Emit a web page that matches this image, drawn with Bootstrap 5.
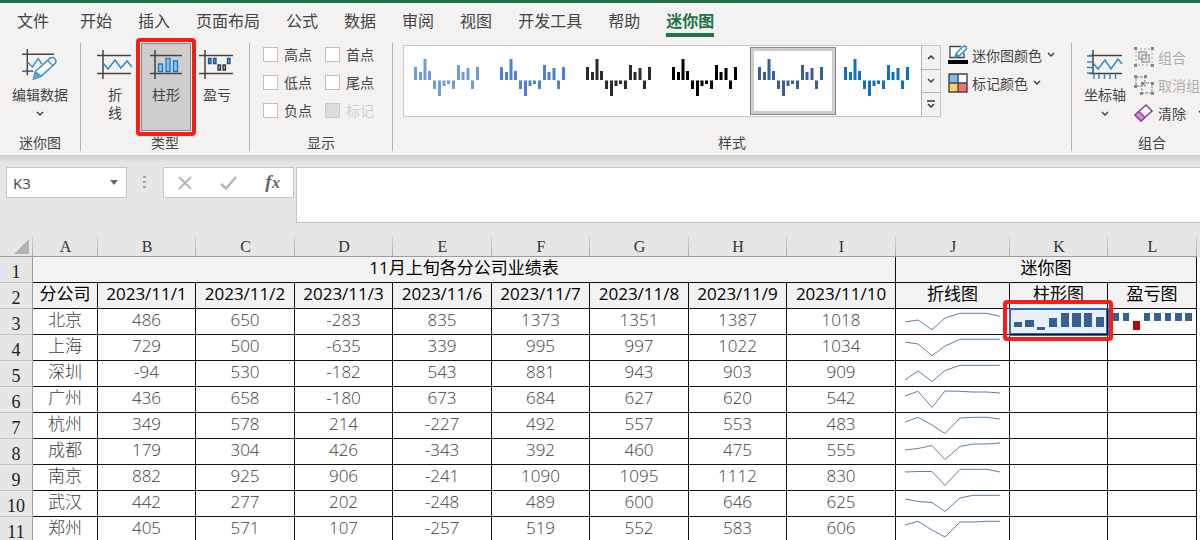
<!DOCTYPE html>
<html lang="zh-CN">
<head>
<meta charset="utf-8">
<meta name="viewport" content="width=device-width, initial-scale=1">
<title>迷你图</title>
<link href="https://cdn.jsdelivr.net/npm/bootstrap@5.3.0/dist/css/bootstrap.min.css" rel="stylesheet">
<style>
  :root { --green: #217346; --ribbon: #f3f2f1; --chrome: #e6e6e6; --ink: #444; --mark-red: #fd1c14; }
  body { font-family: "Noto Sans CJK SC", sans-serif; font-size: 14px; line-height: 18px; color: var(--ink); background: #fff; }
  button { color: inherit; background: none; border: 0; padding: 0; }
  svg { display: block; flex: none; }

  .ribbon-tabs { border-top: 3px solid var(--green); background: var(--ribbon); gap: 26px; padding: 5px 0 0 17px; height: 40px; }
  .ribbon-tabs .nav-link { padding: 0; font-size: 16px; line-height: 25px; height: 29px; color: var(--ink); white-space: nowrap; }
  .ribbon-tabs .nav-item:first-child { margin-right: 5px; }
  .ribbon-tabs .nav-link.active { color: var(--green); font-weight: 700; border-bottom: 4px solid var(--green); }

  .ribbon { background: var(--ribbon); height: 115px; padding-top: 2px; }
  .ribbon-group { display: flex; flex-direction: column; flex: none; height: 108px; margin-top: 1px; border-right: 1px solid #b5b3b1; }
  .group-body { flex: 1; display: flex; }
  .group-name { text-align: center; line-height: 18px; }
  .g-edit { width: 81px; } .g-type { width: 169px; } .g-show { width: 143px; } .g-style { flex: 1 1 0; min-width: 0; }
  .g-style .group-body { padding-top: 2px; }
  .g-combine { width: 128px; border-right: 0; overflow: hidden; }
  .g-combine > * { width: 160px; }

  .big-btn { display: flex; flex-direction: column; align-items: center; height: 88px; padding-top: 6px; white-space: nowrap; }
  .big-btn svg { margin-bottom: 4px; }
  .big-btn.first-type { width: 44px; margin: 0 4px 0 12px; }
  .big-btn.pressed { position: relative; background: #d0cecd; border: 1px solid #8a8886; padding-top: 5px; }
  .callout { position: absolute; border: 4px solid var(--mark-red); border-radius: 4px; pointer-events: none; z-index: 3; }
  .callout-btn { inset: -6px; }
  .callout-cell { inset: -9px -6px -7px -7px; }

  .show-grid { display: grid; grid-template-columns: 62px auto; align-content: start; row-gap: 10px; padding: 2px 0 0 13px; }
  .show-grid .form-check { display: flex; align-items: center; gap: 6px; margin: 0; padding: 0; min-height: 0; height: 18px; }
  .show-grid .form-check-input { float: none; margin: 0; width: 15px; height: 15px; border-radius: 0; border: 1px solid #c2c0be; background: #fff; }
  .show-grid .form-check-input:disabled { background: #dcdbda; border-color: #c8c8c8; opacity: 1; }
  .show-grid .form-check-label { opacity: 1; }
  .off { color: #b0aeac !important; }

  .gallery { flex: 0 1 538px; margin: 0 7px 0 10px; height: 72px; border: 1px solid #c8c6c4; background: #fff; overflow: hidden; }
  .thumbs { padding: 1px 0 0 2px; }
  .thumb { display: flex; align-items: flex-start; flex: none; width: 86px; height: 68px; padding: 8px 0 0 4px; border: 4px solid transparent; }
  .thumb.chosen { border-color: #cfcdcb; outline: 1px solid #8a8886; outline-offset: -1px; }
  .scrollers { width: 19px; margin-left: auto; background: var(--ribbon); border-left: 1px solid #b5b3b1; }
  .scrollers button { flex: 1; display: flex; align-items: center; justify-content: center; }
  .scrollers button + button { border-top: 1px solid #b5b3b1; }
  .row-btn { display: flex; align-items: center; gap: 4px; height: 20px; white-space: nowrap; }
  .row-btn svg + span + svg { margin-left: 1px; }

  .formula-bar { background: linear-gradient(#d0cecd, var(--chrome) 8px); height: 80px; padding: 12px 0 0 6px; }
  .formula-bar .box { background: #fff; border: 1px solid #c6c6c6; height: 31px; }
  .name-box { width: 121px; }
  .name-box input { width: 90px; border: 0; padding: 0 6px; color: var(--ink); font: 15px/28px "Open Sans", sans-serif; outline: 0; background: none; }
  .fx-box { width: 131px; padding: 0 13px; margin-right: 2px; }
  .fx-btn { font: italic 700 19px/24px "Liberation Serif", serif; color: #666; }
  .formula-input { flex: 1; border: 1px solid #c6c6c6; border-right: 0; background: #fdfdfd; height: 56px; resize: none; outline: 0; border-radius: 0; }

  .sheet { table-layout: fixed; width: 100%; border-collapse: separate; border-spacing: 0; color: #3c3c3c; font: 300 17px/20px "Open Sans", "Noto Sans CJK SC", sans-serif; text-align: center; }
  .sheet th, .sheet td { padding: 0 0 3px; height: 26px; border-right: 1px solid #111; border-bottom: 1px solid #111; white-space: nowrap; }
  .sheet thead th { height: 22px; background: linear-gradient(to top, #a8a8a8, #d8d8d8) right / 1px 100% no-repeat var(--chrome); border-right: 0; border-bottom-color: #9c9c9c; font: 400 16px/19px "Liberation Serif", serif; color: #333; padding: 2px 0 0; }
  .sheet tbody th.num { background: var(--chrome); border-right-color: #9c9c9c; border-bottom-color: #c4c4c4; font: 400 18px/20px "Liberation Serif", serif; color: #222; padding: 4px 0 0; }
  .sheet th.title { background: #f2f2f2; color: #000; font-weight: 400; }
  .sheet th.day { font-weight: 500; }
  .sheet td.spare, .sheet thead th.spare { border-right: 0; border-bottom-color: #d4d4d4; background-image: none; }
  .sheet td.spark { position: relative; padding: 0; }
  .spark polyline { fill: none; stroke: #5f7fa8; stroke-width: 1; }
  .picked { background: #e9f0fa; box-shadow: inset 0 0 0 1px #2b68bf, 0 0 0 1px #2b68bf; z-index: 2; }
</style>
</head>
<body>
<svg width="0" height="0" class="position-absolute" aria-hidden="true">
  <symbol id="bars" viewBox="0 0 66 38"><path fill="currentColor" d="M0 8h3v13H0zM5 13h3v8H5zM9.500 0h3v21h-3zM14 12h3v9h-3zM19 21.500h3V30h-3zM24 21.500h3V37h-3zM28.500 21.500h3V27h-3zM33 21.500h3V25h-3zM38 21.500h3V30h-3zM43 6h3v15h-3zM47.500 13h3v8h-3zM52.500 9h3v12h-3zM57 21.500h3V30h-3zM62 8h3v13h-3z"/></symbol>
  <symbol id="down" viewBox="0 0 8 6"><path d="M1 1l3 3 3-3" fill="none" stroke="#444" stroke-width="1.500"/></symbol>
  <symbol id="frame" viewBox="0 0 36 32"><path d="M0 6.500h34M0 24.500h34M6 1v29" fill="none" stroke="#444" stroke-width="1.500"/></symbol>
</svg>

<div class="vh-100 d-flex flex-column overflow-hidden">
  <ul class="nav ribbon-tabs flex-nowrap flex-shrink-0">
    <li class="nav-item"><a class="nav-link" href="#">文件</a></li>
    <li class="nav-item"><a class="nav-link" href="#">开始</a></li>
    <li class="nav-item"><a class="nav-link" href="#">插入</a></li>
    <li class="nav-item"><a class="nav-link" href="#">页面布局</a></li>
    <li class="nav-item"><a class="nav-link" href="#">公式</a></li>
    <li class="nav-item"><a class="nav-link" href="#">数据</a></li>
    <li class="nav-item"><a class="nav-link" href="#">审阅</a></li>
    <li class="nav-item"><a class="nav-link" href="#">视图</a></li>
    <li class="nav-item"><a class="nav-link" href="#">开发工具</a></li>
    <li class="nav-item"><a class="nav-link" href="#">帮助</a></li>
    <li class="nav-item"><a class="nav-link active" href="#" aria-current="page">迷你图</a></li>
  </ul>

  <div class="ribbon d-flex flex-shrink-0">
    <section class="ribbon-group g-edit">
      <div class="group-body justify-content-center">
        <button class="big-btn" type="button">
          <svg width="36" height="32" viewBox="0 0 38 34"><path d="M0 5.500h34M0 23.500h12M5.500 0v28" fill="none" stroke="#444" stroke-width="1.500"/><path d="M6 14l5 5 6-9 4 6" fill="none" stroke="#2e8bd0" stroke-width="1.500"/><path d="M12 32l2-8L30 9.500q3-1.500 5 1t0 5L20 29z" fill="#fff" stroke="#2e8bd0" stroke-width="1.500"/><path d="M12 32l2-8 6 5z" fill="#5aa9e0"/><path d="M27 12l5 5M14 24l6 5" stroke="#2e8bd0" stroke-width="1.300"/></svg>
          <span>编辑数据</span>
          <svg class="mt-2" width="8" height="6"><use href="#down"/></svg>
        </button>
      </div>
      <div class="group-name">迷你图</div>
    </section>

    <section class="ribbon-group g-type">
      <div class="group-body">
        <button class="big-btn first-type" type="button">
          <svg width="36" height="32" viewBox="0 0 36 32"><use href="#frame"/><path d="M6 14l5 6 7-9 6 8 6-7 5 6" fill="none" stroke="#2e8bd0" stroke-width="1.500"/></svg>
          <span>折<br>线</span>
        </button>
        <button class="big-btn pressed px-1" type="button" aria-pressed="true">
          <svg class="mx-1" width="32" height="32" viewBox="0 0 34 32" preserveAspectRatio="xMidYMid slice"><use href="#frame" width="36" height="32"/><g fill="#83c3f0" stroke="#1f78be" stroke-width="1.300"><path d="M9.500 15h4v7.500h-4zM17 9.500h4v13h-4zM24.500 12h4v10.500h-4z"/></g></svg>
          <span>柱形</span>
          <i class="callout callout-btn"></i>
        </button>
        <button class="big-btn px-2" type="button">
          <svg width="36" height="32" viewBox="0 0 36 32"><use href="#frame"/><path d="M9.500 9.500h2.500v5H9.500zM14.500 9.500h2.500v5h-2.500zM28.500 9.500h2.500v5h-2.500z" fill="#4ba0dd" stroke="#155a96" stroke-width="1.300"/><path d="M19 16h2.500v5H19zM24 16h2.500v5H24z" fill="#aaa" stroke="#333" stroke-width="1.300"/></svg>
          <span>盈亏</span>
        </button>
      </div>
      <div class="group-name">类型</div>
    </section>

    <section class="ribbon-group g-show">
      <div class="group-body show-grid">
        <div class="form-check"><input class="form-check-input" type="checkbox" id="c1"><label class="form-check-label" for="c1">高点</label></div>
        <div class="form-check"><input class="form-check-input" type="checkbox" id="c2"><label class="form-check-label" for="c2">首点</label></div>
        <div class="form-check"><input class="form-check-input" type="checkbox" id="c3"><label class="form-check-label" for="c3">低点</label></div>
        <div class="form-check"><input class="form-check-input" type="checkbox" id="c4"><label class="form-check-label" for="c4">尾点</label></div>
        <div class="form-check"><input class="form-check-input" type="checkbox" id="c5"><label class="form-check-label" for="c5">负点</label></div>
        <div class="form-check"><input class="form-check-input" type="checkbox" id="c6" disabled><label class="form-check-label off" for="c6">标记</label></div>
      </div>
      <div class="group-name">显示</div>
    </section>

    <section class="ribbon-group g-style">
      <div class="group-body">
        <div class="gallery d-flex">
          <div class="thumbs d-flex overflow-hidden">
            <button class="thumb" type="button" aria-label="样式 1" style="color:#6f9bd8"><svg width="66" height="38"><use href="#bars"/></svg></button>
            <button class="thumb" type="button" aria-label="样式 2" style="color:#4a82cf"><svg width="66" height="38"><use href="#bars"/></svg></button>
            <button class="thumb" type="button" aria-label="样式 3" style="color:#2b2b2b"><svg width="66" height="38"><use href="#bars"/></svg></button>
            <button class="thumb" type="button" aria-label="样式 4" style="color:#000"><svg width="66" height="38"><use href="#bars"/></svg></button>
            <button class="thumb chosen" type="button" aria-label="样式 5" style="color:#365f9a"><svg width="66" height="38"><use href="#bars"/></svg></button>
            <button class="thumb" type="button" aria-label="样式 6" style="color:#0f6fc0"><svg width="66" height="38"><use href="#bars"/></svg></button>
          </div>
          <div class="scrollers d-flex flex-column flex-shrink-0">
            <button type="button" aria-label="上一行"><svg width="8" height="6" viewBox="0 0 8 6"><path d="M1 5l3-3 3 3" fill="none" stroke="#333" stroke-width="1.500"/></svg></button>
            <button type="button" aria-label="下一行"><svg width="8" height="6"><use href="#down"/></svg></button>
            <button type="button" aria-label="更多"><svg width="10" height="9" viewBox="0 0 10 9"><path d="M1 1h8M2 4l3 3 3-3" fill="none" stroke="#333" stroke-width="1.500"/></svg></button>
          </div>
        </div>
        <div class="d-flex flex-column gap-2">
          <button class="row-btn" type="button">
            <svg width="20" height="20" viewBox="0 0 20 20"><path d="M13 1.500H2v11h14V8" fill="#fff" stroke="#444" stroke-width="1.300"/><path d="M7 12l1.500-4 6.500-6.500q2-1 3 0t0 3L11 11z" fill="#fff" stroke="#2e8bd0" stroke-width="1.400"/><path d="M7 12l1.500-4 2.500 3z" fill="#2e8bd0"/><path d="M0 15h20v4H0z"/></svg>
            <span>迷你图颜色</span><svg width="8" height="6"><use href="#down"/></svg>
          </button>
          <button class="row-btn" type="button">
            <svg width="20" height="20" viewBox="0 0 20 20"><path fill="#80b9f0" d="M1 1h9v9H1z"/><path fill="#fff" d="M10 1h9v9h-9z"/><path fill="#fbd36b" d="M1 10h9v9H1z"/><path fill="#f2707a" d="M10 10h9v9h-9z"/><path d="M1 1h18v18H1zM10 1v18M1 10h18" fill="none" stroke="#444" stroke-width="1.400"/></svg>
            <span>标记颜色</span><svg width="8" height="6"><use href="#down"/></svg>
          </button>
        </div>
      </div>
      <div class="group-name">样式</div>
    </section>

    <section class="ribbon-group g-combine">
      <div class="group-body">
        <button class="big-btn ms-2 px-1" type="button">
          <svg width="36" height="32" viewBox="0 0 36 32"><path d="M2 6.500h33M2 24.500h33M6 1v24" fill="none" stroke="#444" stroke-width="1.500"/><path d="M0 7h5M0 13h5M0 18.500h5M0 24h5M7 25v5M12 25v5M17.500 25v5M23 25v5M28.500 25v5M6 14l5 6 7-9 6 9 7-10 4 5" fill="none" stroke="#2e8bd0" stroke-width="1.500"/></svg>
          <span>坐标轴</span>
          <svg class="mt-2" width="8" height="6"><use href="#down"/></svg>
        </button>
        <div class="d-flex flex-column gap-2 ms-1 pt-1">
          <button class="row-btn off" type="button" disabled>
            <svg width="20" height="20" viewBox="0 0 20 20"><g fill="none" stroke="#a3a1a0"><path d="M2 2h16v16H2z" stroke-dasharray="2 2"/><path d="M5 5h7v7H5zM8 8h7v7H8z" stroke-width="1.500"/></g><path fill="#888" d="M0 0h3v3H0zM17 0h3v3h-3zM0 17h3v3H0zM17 17h3v3h-3z"/></svg>
            <span>组合</span>
          </button>
          <button class="row-btn off" type="button" disabled>
            <svg width="20" height="20" viewBox="0 0 20 20"><path d="M2 2h9v9H2zM8 8h10v10H8z" fill="none" stroke="#a3a1a0" stroke-width="1.300" stroke-dasharray="3 1"/><path fill="#888" d="M0 0h3v3H0zM10 0h3v3h-3zM0 10h3v3H0zM17 7h3v3h-3zM6 17h3v3H6zM17 17h3v3h-3zM7 7h3v3H7z"/></svg>
            <span>取消组</span>
          </button>
          <button class="row-btn" type="button">
            <svg width="20" height="20" viewBox="0 0 20 20"><path d="M1 12L12 2l6 6L7 18z" fill="#fff" stroke="#8f3f9e" stroke-width="1.500"/><path d="M1 12l4-3.500 6 6L7 18z" fill="#d68fdd" stroke="#8f3f9e" stroke-width="1.300"/></svg>
            <span>清除</span><svg class="ms-2" width="8" height="6"><use href="#down"/></svg>
          </button>
        </div>
      </div>
      <div class="group-name">组合</div>
    </section>
  </div>

  <div class="formula-bar d-flex flex-shrink-0 align-items-start">
    <div class="box name-box d-flex align-items-center">
      <input type="text" value="K3" aria-label="名称框">
      <svg class="ms-auto me-2" width="8" height="5" viewBox="0 0 8 5"><path d="M0 0h8L4 5z" fill="#666"/></svg>
    </div>
    <svg width="36" height="31" viewBox="0 0 36 31"><path d="M16 9h3v2h-3zM16 14h3v2h-3zM16 19h3v2h-3z" fill="#a5a5a5"/></svg>
    <div class="box fx-box d-flex align-items-center justify-content-between">
      <button type="button" aria-label="取消"><svg width="16" height="14" viewBox="0 0 16 14"><path d="M2 1l12 12M14 1L2 13" stroke="#b5b5b5" stroke-width="1.800"/></svg></button>
      <button type="button" aria-label="输入"><svg width="18" height="14" viewBox="0 0 18 14"><path d="M1 8l5 4.500L16 1" fill="none" stroke="#b5b5b5" stroke-width="2.500"/></svg></button>
      <button type="button" class="fx-btn" aria-label="插入函数"><span>f</span><small>x</small></button>
    </div>
    <textarea class="formula-input" aria-label="编辑栏"></textarea>
  </div>

  <table class="sheet flex-shrink-0">
    <colgroup>
      <col style="width:33px"><col style="width:65px"><col style="width:98px"><col style="width:99px"><col style="width:98px"><col style="width:99px"><col style="width:98px"><col style="width:99px"><col style="width:98px"><col style="width:109px"><col style="width:114px"><col style="width:98px"><col style="width:89px"><col>
    </colgroup>
    <thead>
      <tr><th aria-label="全选"><svg class="ms-auto me-1" width="15" height="15" viewBox="0 0 15 15"><path d="M15 0v15H0z" fill="#b2b2b2"/></svg></th><th>A</th><th>B</th><th>C</th><th>D</th><th>E</th><th>F</th><th>G</th><th>H</th><th>I</th><th>J</th><th>K</th><th>L</th><th class="spare"></th></tr>
    </thead>
    <tbody>
      <tr><th class="num">1</th><th class="title" colspan="9">11月上旬各分公司业绩表</th><th class="title" colspan="3">迷你图</th><td class="spare"></td></tr>
      <tr><th class="num">2</th><th class="title">分公司</th><th class="title day">2023/11/1</th><th class="title day">2023/11/2</th><th class="title day">2023/11/3</th><th class="title day">2023/11/6</th><th class="title day">2023/11/7</th><th class="title day">2023/11/8</th><th class="title day">2023/11/9</th><th class="title day">2023/11/10</th><th class="title">折线图</th><th class="title">柱形图</th><th class="title">盈亏图</th><td class="spare"></td></tr>
      <tr><th class="num">3</th><td>北京</td><td>486</td><td>650</td><td>-283</td><td>835</td><td>1373</td><td>1351</td><td>1387</td><td>1018</td>
        <td class="spark"><svg width="113" height="25"><polyline points="9,13 22,11 36,20.700 49,9 64,4.300 77,4.300 91,4.300 104,7.300"/></svg></td>
        <td class="spark picked"><svg width="97" height="25"><path fill="#376092" d="M4 13h8v5H4zM15 11h9v7h-9zM27 18h8v3h-8zM39 9h8v9h-8zM51 4h8v14h-8zM62 4h9v14h-9zM74 4h8v14h-8zM86 8h8v10h-8z"/></svg><i class="callout callout-cell"></i></td>
        <td class="spark"><svg width="88" height="25"><path fill="#376092" d="M4 4h7v8H4zM15 4h6v8h-6zM36 4h6v8h-6zM46 4h7v8h-7zM57 4h6v8h-6zM67 4h7v8h-7zM77 4h7v8h-7z"/><path fill="#c00000" d="M25 12h7v9h-7z"/></svg></td><td class="spare"></td></tr>
      <tr><th class="num">4</th><td>上海</td><td>729</td><td>500</td><td>-635</td><td>339</td><td>995</td><td>997</td><td>1022</td><td>1034</td>
        <td class="spark"><svg width="113" height="25"><polyline points="9,7 22,9 36,20.700 49,11 64,4.300 77,4.300 91,4.300 104,4.300"/></svg></td><td></td><td></td><td class="spare"></td></tr>
      <tr><th class="num">5</th><td>深圳</td><td>-94</td><td>530</td><td>-182</td><td>543</td><td>881</td><td>943</td><td>903</td><td>909</td>
        <td class="spark"><svg width="113" height="25"><polyline points="9,19 22,10 36,20.500 49,9.500 64,4.300 77,4.300 91,4.300 104,4.300"/></svg></td><td></td><td></td><td class="spare"></td></tr>
      <tr><th class="num">6</th><td>广州</td><td>436</td><td>658</td><td>-180</td><td>673</td><td>684</td><td>627</td><td>620</td><td>542</td>
        <td class="spark"><svg width="113" height="25"><polyline points="9,9 22,4.300 36,20.500 49,4 64,4.300 77,5 91,5 104,6"/></svg></td><td></td><td></td><td class="spare"></td></tr>
      <tr><th class="num">7</th><td>杭州</td><td>349</td><td>578</td><td>214</td><td>-227</td><td>492</td><td>557</td><td>553</td><td>483</td>
        <td class="spark"><svg width="113" height="25"><polyline points="9,9 22,4.300 36,12 49,20.500 64,5 77,4.300 91,4.300 104,6"/></svg></td><td></td><td></td><td class="spare"></td></tr>
      <tr><th class="num">8</th><td>成都</td><td>179</td><td>304</td><td>426</td><td>-343</td><td>392</td><td>460</td><td>475</td><td>555</td>
        <td class="spark"><svg width="113" height="25"><polyline points="9,11 22,9.500 36,6.500 49,20.500 64,7.500 77,5 91,5 104,4"/></svg></td><td></td><td></td><td class="spare"></td></tr>
      <tr><th class="num">9</th><td>南京</td><td>882</td><td>925</td><td>906</td><td>-241</td><td>1090</td><td>1095</td><td>1112</td><td>830</td>
        <td class="spark"><svg width="113" height="25"><polyline points="9,7 22,6.500 36,6.500 49,20.500 64,4.300 77,4.300 91,4.300 104,7"/></svg></td><td></td><td></td><td class="spare"></td></tr>
      <tr><th class="num">10</th><td>武汉</td><td>442</td><td>277</td><td>202</td><td>-248</td><td>489</td><td>600</td><td>646</td><td>625</td>
        <td class="spark"><svg width="113" height="25"><polyline points="9,8 22,10.500 36,11.500 49,20.500 64,7 77,4.300 91,4.300 104,4.300"/></svg></td><td></td><td></td><td class="spare"></td></tr>
      <tr><th class="num">11</th><td>郑州</td><td>405</td><td>571</td><td>107</td><td>-257</td><td>519</td><td>552</td><td>583</td><td>606</td>
        <td class="spark"><svg width="113" height="25"><polyline points="9,8 22,4.300 36,13 49,20 64,5 77,5 91,4.300 104,4.300"/></svg></td><td></td><td></td><td class="spare"></td></tr>
    </tbody>
  </table>
</div>
<script src="https://cdn.jsdelivr.net/npm/bootstrap@5.3.0/dist/js/bootstrap.bundle.min.js"></script>
</body>
</html>
